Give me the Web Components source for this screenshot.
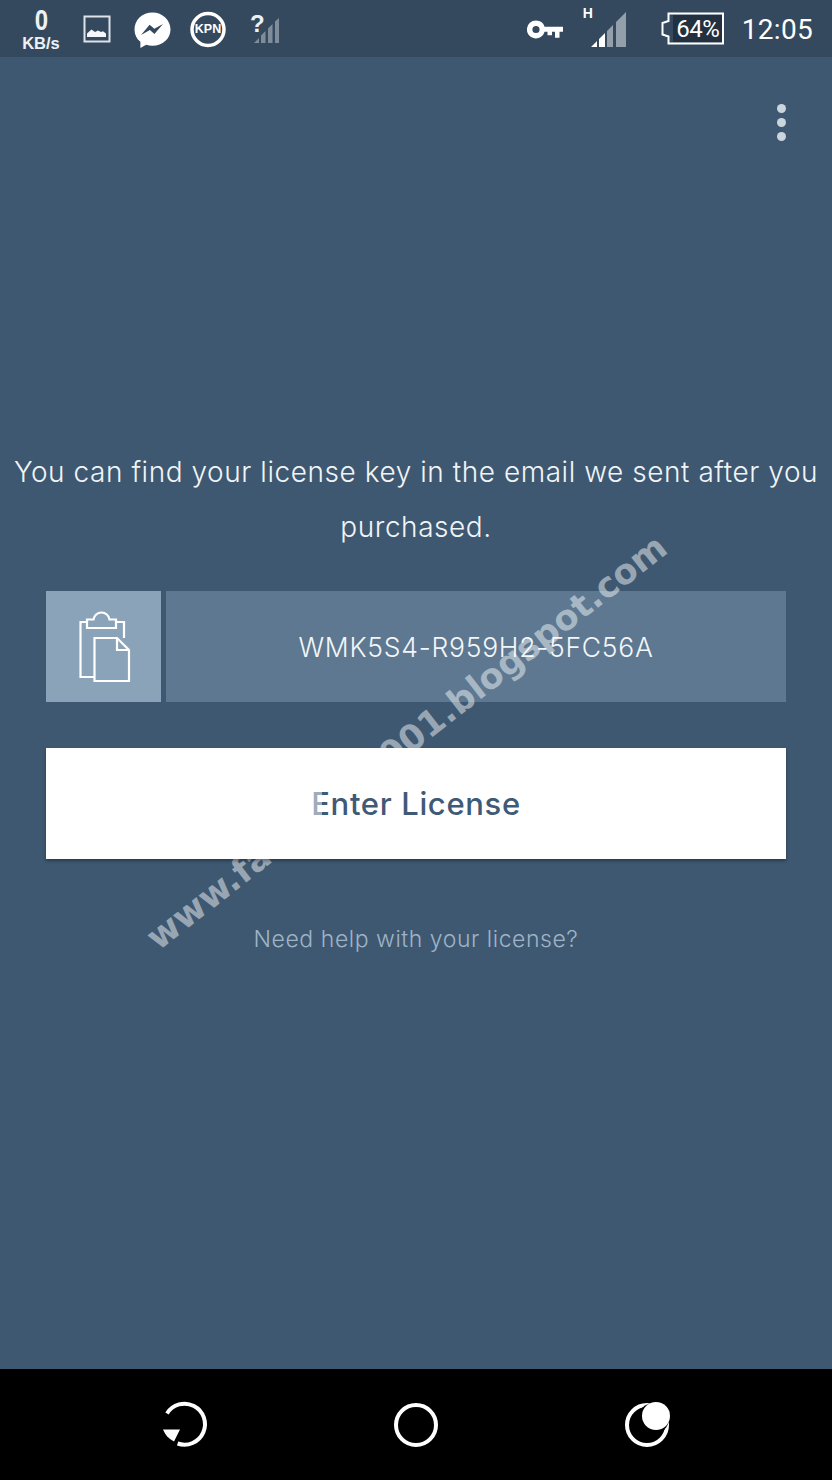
<!DOCTYPE html>
<html>
<head>
<meta charset="utf-8">
<title>Enter License</title>
<style>
  html, body { margin: 0; height: 100%; background: #3e5871; }
  body { display: flex; flex-direction: column; height: 1480px; overflow: hidden; }
</style>
</head>
<body>
<status-bar></status-bar>
<license-page>
  <span slot="message">You can find your license key in the email we sent after you purchased.</span>
  <license-field slot="field">WMK5S4-R959H2-5FC56A</license-field>
  <enter-button slot="action">Enter License</enter-button>
  <span slot="help">Need help with your license?</span>
</license-page>
<nav-bar></nav-bar>

<script>
class StatusBar extends HTMLElement {
  constructor() {
    super();
    this.attachShadow({ mode: 'open' });
  }
  connectedCallback() {
    this.shadowRoot.innerHTML = `
      <style>
        :host { display: flex; flex: none; height: 57px; background: #34495e; color: #fff; box-sizing: border-box; padding: 0 19px 0 22px; font-family: Roboto, "Liberation Sans", sans-serif; }
        svg { display: block; flex: none; height: 57px; }
        .speed { width: 38px; display: flex; flex-direction: column; align-items: center; flex: none; color: #eef1f3; }
        .speed b { font: 700 30px/28px "Liberation Sans", sans-serif; margin-top: 6px; transform: scaleX(.8); }
        .speed i { font: 700 16.500px/16px "Liberation Sans", sans-serif; margin-top: 1px; white-space: nowrap; }
        .grow { flex: 1; }
        .battery { position: relative; width: 63px; height: 57px; flex: none; margin-left: 34px; }
        .battery svg { position: absolute; left: 0; top: 0; }
        .battery span { position: absolute; left: 13px; top: 14px; width: 48px; text-align: center; font: 400 24px/30px Roboto, sans-serif; letter-spacing: -.5px; }
        .time { flex: none; margin-left: 18px; font: 400 28px/60px Roboto, sans-serif; letter-spacing: .3px; }
      </style>
      <div class="speed"><b>0</b><i>KB/s</i></div>
      <svg width="28" viewBox="0 0 28 57" style="margin-left:23px">
        <rect x="1.5" y="16.5" width="25" height="25" fill="none" stroke="#dfe3e7" stroke-width="2"/>
        <path d="M4 37V33.500L8.500 29.500 12 32l3-1.500 3 1.500 2-.7L23 33.500V37Z" fill="#f4f6f7"/>
      </svg>
      <svg width="37" viewBox="0 0 37 57" style="margin-left:23px">
        <path d="M18.500 12.500C8.400 12.500 .5 19.800 .5 29.400c0 5.100 2.200 9.400 5.900 12.400v6.200l5.800-3.200c2 .6 4.100.9 6.300.9 10.100 0 18-7.200 18-16.300S28.600 12.500 18.500 12.500Z" fill="#fff"/>
        <path d="M7 35 15.600 24.800 20.300 28.800 29 24 20.400 34 15.900 30Z" fill="#34495e"/>
      </svg>
      <svg width="36" viewBox="0 0 36 57" style="margin-left:19px">
        <circle cx="18" cy="29.500" r="16" fill="none" stroke="#fff" stroke-width="3.500"/>
      </svg>
      <svg width="32" viewBox="0 0 32 57" style="margin-left:22px">
        <path d="M6 43 11 38V43ZM13 43V35.500L17.500 31V43ZM20 43V28.500L24.500 24V43ZM27 43V21.500L31 18V43Z" fill="#7f8d9b"/>
      </svg>
      <div class="grow"></div>
      <svg width="36" viewBox="0 0 36 57">
        <path fill-rule="evenodd" d="M9 20.500a9 9 0 0 1 8.600 6.300H36v5h-3.500v6H28v-6h-3v3.500h-4.500v-3.500h-2.900A9 9 0 1 1 9 20.500Zm0 5.400a3.600 3.600 0 1 0 0 7.200 3.600 3.600 0 0 0 0-7.200Z" fill="#fff"/>
      </svg>
      <svg width="46" viewBox="0 0 46 57" style="margin-left:18px">
        <path d="M10 47 16 41V47Z M18 47V39L24 33V47Z" fill="#fff"/>
        <path d="M26 47V31L32 25V47ZM35 47V22L45 12V47Z" fill="#93a0ac"/>
      </svg>
      <div class="battery">
        <svg width="63" height="57" viewBox="0 0 63 57">
          <path d="M7.500 13.500H62V43.500H7.500V36.500L1.500 34.500V23L7.500 21Z" fill="none" stroke="#fff" stroke-width="2"/>
          <rect x="12" y="15" width="49" height="27" fill="#22303f"/>
        </svg>
        <span>64%</span>
      </div>
      <div class="time">12:05</div>
    `;
    // KPN label and the "?" and "H" markers sit over their icons as real text
    const svgs = this.shadowRoot.querySelectorAll('svg');
    this.wrapLabel(svgs[2], 'KPN', 'left:0;top:23px;width:36px;font:700 12.500px/13px "Liberation Sans",sans-serif;text-align:center');
    this.wrapLabel(svgs[3], '?', 'left:2px;top:12px;font:700 24px/23px "Liberation Sans",sans-serif;color:#eef1f3');
    this.wrapLabel(svgs[5], 'H', 'left:2px;top:6px;font:700 14px/14px "Liberation Sans",sans-serif');
  }
  wrapLabel(svg, text, css) {
    const box = document.createElement('div');
    box.style.cssText = 'position:relative;flex:none;height:57px;margin-left:' + (svg.style.marginLeft || '0');
    svg.style.marginLeft = '0';
    svg.replaceWith(box);
    box.appendChild(svg);
    const label = document.createElement('span');
    label.style.cssText = 'position:absolute;' + css;
    label.textContent = text;
    box.appendChild(label);
  }
}
customElements.define('status-bar', StatusBar);

class LicenseField extends HTMLElement {
  constructor() {
    super();
    this.attachShadow({ mode: 'open' });
    this.shadowRoot.innerHTML = `
      <style>
        :host { display: flex; gap: 5px; height: 111px; }
        .paste { flex: none; width: 115px; background: #8ba3b9; display: flex; align-items: center; justify-content: center; }
        .paste svg { margin-left: 3px; }
        .key { flex: 1; background: #5d7890; color: #f3f6f8; display: flex; align-items: center; justify-content: center; font-size: 26.500px; font-weight: 300; letter-spacing: .75px; }
      </style>
      <div class="paste">
        <svg width="52" height="72" viewBox="0 0 52 72" fill="none" stroke="#fff" stroke-width="2.200">
          <path d="M15.500 66H1.500V11H8M37 11H45V27"/>
          <path d="M8 17V8.500H14.500C15 4.500 18.500 1.500 22.500 1.500S30 4.500 30.500 8.500H37V17Z"/>
          <path d="M15.500 70V27H38L50 39V70Z"/>
          <path d="M38 27V39H50"/>
        </svg>
      </div>
      <div class="key"><slot></slot></div>
    `;
  }
}
customElements.define('license-field', LicenseField);

class EnterButton extends HTMLElement {
  constructor() {
    super();
    this.attachShadow({ mode: 'open' });
    this.shadowRoot.innerHTML = `
      <style>
        :host { display: flex; position: relative; height: 111px; background: #fff; color: #3f5a76; align-items: center; justify-content: center; font-size: 31px; font-weight: 500; letter-spacing: .65px; box-shadow: 0 2px 3px rgba(0,0,0,.35); cursor: pointer; }
        .ghost { position: absolute; left: 267px; top: 44px; width: 9px; height: 24px; background: rgba(255,255,255,.5); }
      </style>
      <slot></slot>
      <div class="ghost"></div>
    `;
  }
}
customElements.define('enter-button', EnterButton);

class LicensePage extends HTMLElement {
  constructor() {
    super();
    this.attachShadow({ mode: 'open' });
    this.shadowRoot.innerHTML = `
      <style>
        :host { display: flex; flex-direction: column; flex: 1; position: relative; background: #3e5871; color: #f1f4f6; font-family: Inter, "Open Sans", sans-serif; }
        .menu { display: flex; justify-content: flex-end; padding: 47px 46px 0 0; }
        .dots { display: flex; flex-direction: column; gap: 5px; }
        .dots i { width: 9px; height: 9px; border-radius: 50%; background: #cbd5dd; }
        .message { margin: 304px 0 0; padding: 0 8px; text-align: center; font-size: 28px; font-weight: 300; letter-spacing: .55px; line-height: 55px; }
        .form { display: flex; flex-direction: column; gap: 46px; margin: 36px 46px 0; }
        ::slotted(enter-button) { z-index: 2; }
        .help { margin-top: 66px; text-align: center; font-size: 23px; font-weight: 300; letter-spacing: .55px; color: #9eb3c6; }
        .mark { position: absolute; left: 82px; top: 665px; width: 649px; display: flex; justify-content: space-between; transform: rotate(-38deg); color: rgba(255,255,255,.48); font: 700 35px/40px "DejaVu Sans", sans-serif; z-index: 1; pointer-events: none; }
      </style>
      <div class="menu"><div class="dots"><i></i><i></i><i></i></div></div>
      <div class="message"><slot name="message"></slot></div>
      <div class="form">
        <slot name="field"></slot>
        <slot name="action"></slot>
      </div>
      <div class="help"><slot name="help"></slot></div>
      <div class="mark"><span>www.fa</span><span>001.blogspot.com</span></div>
    `;
  }
}
customElements.define('license-page', LicensePage);

class NavBar extends HTMLElement {
  constructor() {
    super();
    this.attachShadow({ mode: 'open' });
    this.shadowRoot.innerHTML = `
      <style>
        :host { display: flex; flex: none; height: 111px; background: #000; align-items: center; justify-content: center; gap: 185px; }
        svg { display: block; overflow: visible; }
      </style>
      <svg width="46" height="46" viewBox="0 0 46 46" fill="none" stroke="#fff" stroke-width="4">
        <path d="M5 11.500A20.500 20.500 0 1 1 15.600 41.500"/>
        <path d="M1 27.500H18L12 39.500C7 37 3 33 1 27.500Z" fill="#fff" stroke="none"/>
      </svg>
      <svg width="46" height="46" viewBox="0 0 46 46" fill="none" stroke="#fff" stroke-width="4"><circle cx="23" cy="23" r="20"/></svg>
      <svg width="46" height="46" viewBox="0 0 46 46" fill="none" stroke="#fff" stroke-width="4">
        <circle cx="23" cy="23" r="20"/>
        <circle cx="29.500" cy="16.500" r="15.500" fill="#000" stroke="none"/>
        <circle cx="32" cy="14" r="14" fill="#fff" stroke="none"/>
      </svg>
    `;
  }
}
customElements.define('nav-bar', NavBar);
</script>
</body>
</html>
